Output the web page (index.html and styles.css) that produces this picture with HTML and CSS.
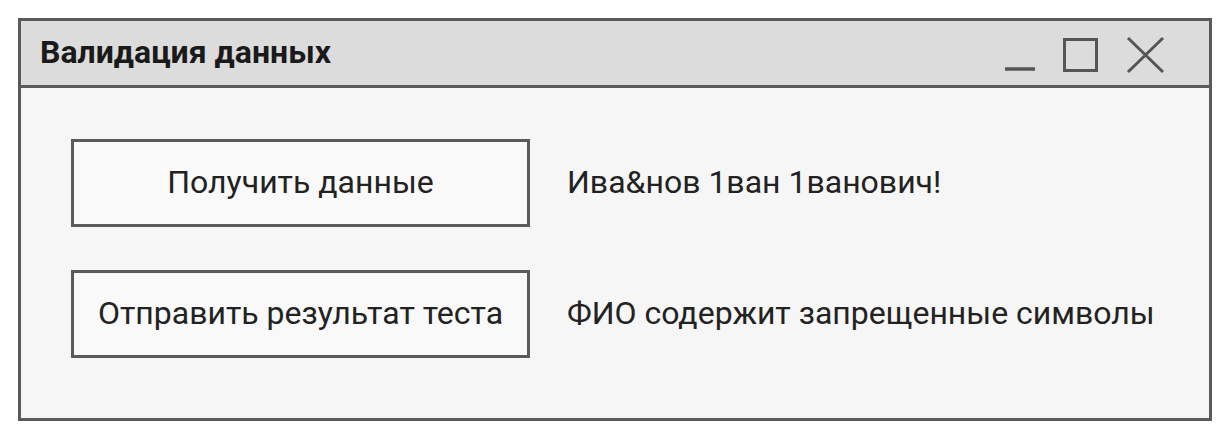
FILE: index.html
```html
<!DOCTYPE html>
<html lang="ru">
<head>
<meta charset="utf-8">
<title>Валидация данных</title>
<link rel="stylesheet" href="styles.css">
</head>
<body>
<div class="window">
  <div class="titlebar">
    <div class="title">Валидация данных</div>
    <div class="controls">
      <svg class="ctl" width="34" height="40" viewBox="0 0 34 40"><line x1="2" y1="33" x2="32" y2="33" stroke="#555" stroke-width="3.5"/></svg>
      <svg class="ctl" width="38" height="40" viewBox="0 0 38 40"><rect x="2.5" y="3.5" width="32" height="31" fill="none" stroke="#555" stroke-width="3"/></svg>
      <svg class="ctl" width="40" height="40" viewBox="0 0 40 40"><path d="M3 2 L38 36 M38 2 L3 36" stroke="#555" stroke-width="3" fill="none"/></svg>
    </div>
  </div>
  <div class="content">
    <div class="btn">Получить данные</div>
    <div class="label">Ива&amp;нов 1ван 1ванович!</div>
    <div class="btn">Отправить результат теста</div>
    <div class="label">ФИО содержит запрещенные символы</div>
  </div>
</div>
</body>
</html>
```

FILE: styles.css
```css
html, body {
  margin: 0;
  padding: 0;
  background: #ffffff;
}
body {
  font-family: Roboto, "Liberation Sans", sans-serif;
  color: #222;
}
.window {
  margin: 18px 0 0 18px;
  width: 1194px;
  height: 403px;
  box-sizing: border-box;
  border: 3px solid #5a5a5a;
  background: #f6f6f6;
  display: flex;
  flex-direction: column;
}
.titlebar {
  height: 67px;
  box-sizing: border-box;
  border-bottom: 3px solid #5a5a5a;
  background: #dcdcdc;
  display: flex;
  align-items: center;
  justify-content: space-between;
  padding: 0 0 0 19px;
}
.title {
  font-weight: 700;
  font-size: 32px;
  color: #1a1a1a;
  padding-bottom: 2px;
}
.controls {
  display: flex;
  align-items: flex-start;
  gap: 25px;
  padding-right: 44px;
  margin-top: 6px;
}
.ctl {
  display: block;
}
.content {
  flex: 1;
  display: grid;
  grid-template-columns: 459px auto;
  grid-auto-rows: 88px;
  column-gap: 37px;
  row-gap: 43px;
  padding: 51px 0 0 50px;
  align-items: center;
}
.btn {
  height: 88px;
  box-sizing: border-box;
  border: 3px solid #5a5a5a;
  background: #f9f9f9;
  display: flex;
  align-items: center;
  justify-content: center;
  font-size: 32px;
  color: #222;
  padding-bottom: 3px;
}
.label {
  font-size: 32px;
  color: #222;
  padding-bottom: 3px;
}
```
